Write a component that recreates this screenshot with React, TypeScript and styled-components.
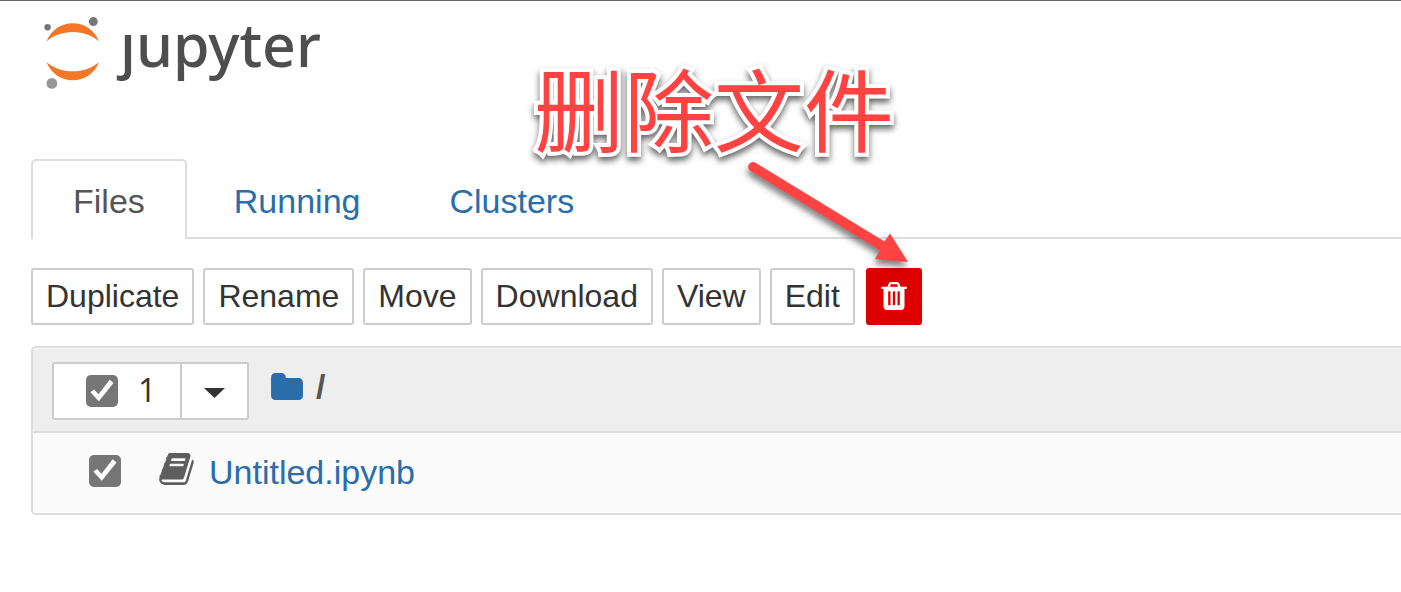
import React from "react";
import styled, { createGlobalStyle, css } from "styled-components";

const GlobalStyle = createGlobalStyle`
  *, *::before, *::after { box-sizing: border-box; }
  body {
    margin: 0;
    background: #fff;
    color: #333;
    font-family: "Liberation Sans", Arial, sans-serif;
    font-size: 32px;
    overflow-x: hidden;
  }
`;

const Page = styled.div`
  position: relative;
  border-top: 1px solid #666;
  padding-left: 31px;
`;

const Header = styled.header`
  height: 158px;
  padding: 14px 0 0 11px;
`;

const Logo = styled.a`
  display: inline-flex;
  align-items: flex-start;
  gap: 18px;
  color: #4e4e4e;
  text-decoration: none;
  font-family: "Noto Sans", "Open Sans", sans-serif;
  font-size: 59px;
  font-weight: 500;
  line-height: 58px;
`;

const TabBar = styled.nav`
  display: flex;
  gap: 5px;
  border-bottom: 2px solid #ddd;
`;

const Tab = styled.a<{ $active?: boolean }>`
  margin-bottom: -2px;
  padding: 16px 40px 14px;
  border: 2px solid transparent;
  border-bottom: 0;
  border-radius: 5px 5px 0 0;
  color: #296eaa;
  font-size: 34px;
  line-height: 48px;
  text-decoration: none;
  ${(p) =>
    p.$active &&
    css`
      border-color: #ddd;
      background: #fff;
      color: #555;
    `}
`;

const Toolbar = styled.div`
  display: flex;
  gap: 9px;
  margin-top: 29px;
`;

const Button = styled.button<{ $danger?: boolean }>`
  display: flex;
  align-items: center;
  justify-content: center;
  height: 57px;
  padding: 0 13px;
  border: 2px solid ${(p) => (p.$danger ? "#d00" : "#ccc")};
  border-radius: 3px;
  background: ${(p) => (p.$danger ? "#d00" : "#fff")};
  color: ${(p) => (p.$danger ? "#fff" : "#333")};
  font: inherit;
  cursor: pointer;
  ${(p) =>
    p.$danger &&
    css`
      margin-left: 2px;
      padding-bottom: 2px;
    `}
`;

const Panel = styled.main`
  margin-top: 21px;
  border: 2px solid #ddd;
  border-right: 0;
  border-radius: 5px 0 0 5px;
  overflow: hidden;
`;

const PanelHeader = styled.div`
  display: flex;
  align-items: flex-start;
  height: 85px;
  padding: 13px 19px;
  border-top: 1px solid #fafafa;
  border-bottom: 2px solid #ddd;
  background: #eee;
`;

const SelectGroup = styled.div`
  display: flex;
  height: 58px;
  border: 2px solid #ccc;
  border-radius: 3px;
  background: #fff;
`;

const SelectAll = styled.label`
  display: flex;
  align-items: center;
  gap: 20px;
  width: 126px;
  padding-left: 32px;
  font-family: "Open Sans", "Noto Sans", sans-serif;

  span { padding-bottom: 4px; }
`;

const Checkbox = styled.input`
  appearance: none;
  display: grid;
  flex: none;
  width: 32px;
  height: 32px;
  margin: 0;
  border-radius: 5px;
  background: #767676;

  &::after {
    content: "";
    width: 32px;
    height: 32px;
    background: #fff;
    clip-path: polygon(14% 54%, 25% 45%, 39% 60%, 74% 15%, 86% 25%, 40% 82%);
  }
`;

const MenuToggle = styled.button`
  display: flex;
  align-items: center;
  justify-content: center;
  width: 67px;
  padding: 4px 0 0;
  border: 0;
  border-left: 2px solid #ccc;
  background: none;
  color: #333;
`;

const Breadcrumb = styled.nav`
  display: flex;
  align-items: center;
  gap: 13px;
  height: 49px;
  margin-left: 22px;
  color: #555;
  font-size: 34px;
  font-weight: 700;

  a { display: flex; color: #296eaa; }
`;

const FileRow = styled.div`
  display: flex;
  align-items: center;
  height: 80px;
  padding: 0 56px 4px;
  border-bottom: 1px solid #fff;
  background: #fafafa;
  color: #5e5e5e;

  svg { margin: 0 15px 4px 38px; }
`;

const FileLink = styled.a`
  padding-top: 4px;
  color: #296eaa;
  font-size: 34px;
  text-decoration: none;
`;

const Note = styled.div`
  position: absolute;
  top: 40px;
  left: 534px;
  color: #ff4242;
  font-family: "Noto Sans CJK SC", sans-serif;
  font-size: 90px;
  line-height: 130px;
  white-space: nowrap;
  pointer-events: none;
  -webkit-text-stroke: 8px #fff;
  paint-order: stroke fill;
  stroke-linejoin: round;
  filter: drop-shadow(0 4px 3px rgba(0, 0, 0, 0.6));
`;

const Arrow = styled.svg`
  position: absolute;
  top: 149px;
  left: 740px;
  pointer-events: none;
  filter: drop-shadow(-1px 5px 3px rgba(0, 0, 0, 0.5));
`;

const Planet = () => (
  <svg width="60" height="76" viewBox="42 15 60 76" aria-hidden="true">
    <path d="M46.5 41.5C51 30 61 23.3 72.8 23.3S94.5 30 99 41.5C92.5 35.5 83 32 72.8 32S53 35.5 46.5 41.5Z" fill="#f37726" />
    <path d="M46.5 62C51 73.5 61 80.2 72.8 80.2S94.5 73.5 99 62C92.5 68 83 71.3 72.8 71.3S53 68 46.5 62Z" fill="#f37726" />
    <circle cx="47.6" cy="27.3" r="3.2" fill="#767677" />
    <circle cx="93.3" cy="21.6" r="4.5" fill="#767677" />
    <circle cx="51.9" cy="83.4" r="5.4" fill="#989798" />
  </svg>
);

const TrashIcon = () => (
  <svg width="26" height="28" viewBox="0 0 1408 1536" fill="currentColor" aria-hidden="true">
    <path d="M512 1248V544q0-14-9-23t-23-9h-64q-14 0-23 9t-9 23v704q0 14 9 23t23 9h64q14 0 23-9t9-23zm256 0V544q0-14-9-23t-23-9h-64q-14 0-23 9t-9 23v704q0 14 9 23t23 9h64q14 0 23-9t9-23zm256 0V544q0-14-9-23t-23-9h-64q-14 0-23 9t-9 23v704q0 14 9 23t23 9h64q14 0 23-9t9-23zM480 256h448l-48-117q-7-9-17-11H546q-10 2-17 11zm928 32v64q0 14-9 23t-23 9h-96v948q0 83-47 143.500t-113 60.500H288q-66 0-113-58.500T128 1336V384H32q-14 0-23-9t-9-23v-64q0-14 9-23t23-9h309l70-167q15-37 54-63t79-26h320q40 0 79 26t54 63l70 167h309q14 0 23 9t9 23z" />
  </svg>
);

const FolderIcon = () => (
  <svg width="32" height="27" viewBox="0 0 1664 1408" fill="currentColor" aria-hidden="true">
    <path d="M1664 480v704q0 92-66 158t-158 66H224q-92 0-158-66T0 1184V224Q0 132 66 66T224 0h320q92 0 158 66t66 158v32h672q92 0 158 66t66 158z" />
  </svg>
);

const BookIcon = () => (
  <svg width="35" height="32" viewBox="0 -40 1664 1540" fill="currentColor" aria-hidden="true">
    <path d="M1639 312q40 57 18 129l-275 906q-19 64-76.500 107.500T1183 1498H260q-77 0-148.500-53.500T12 1313q-24-67-2-127 0-4 3-27t4-37q1-8-3-21.500t-3-19.500q2-11 8-21t16.500-23.500T52 1013q23-38 45-91.500t30-91.500q3-10 .5-30t-.5-28q3-11 17-28t17-23q21-36 42-92t25-90q1-9-2.500-32t.5-28q4-13 22-30.500t22-22.500q19-26 42.500-84.500T340 243q1-8-3-25.500t-2-26.500q2-8 9-18t18-23 17-21q8-12 16.500-30.500t15-35 16-36 19.500-32T469.500-28t36-11.500T553-34l-1 3q38-9 51-9h761q74 0 114 56t18 130l-274 906q-36 119-71.500 153.500T1022 1240H153q-27 0-38 15-11 16-1 43 24 70 144 70h923q29 0 56-15.500t35-41.500l300-987q7-22 5-57 38 15 59 43zm-1064 2q-4 13 2 22.500t20 9.500h608q13 0 25.500-9.500t16.500-22.500l21-64q4-13-2-22.500t-20-9.500h-608q-13 0-25.500 9.500T596 250zm-83 256q-4 13 2 22.500t20 9.500h608q13 0 25.500-9.500t16.500-22.500l21-64q4-13-2-22.500t-20-9.500H555q-13 0-25.500 9.500T513 506z" />
  </svg>
);

const actions = ["Duplicate", "Rename", "Move", "Download", "View", "Edit"];

export default function App() {
  return (
    <>
      <GlobalStyle />
      <Page>
        <Header>
          <Logo href="#" aria-label="jupyter">
            <Planet />
            <span>ȷupyter</span>
          </Logo>
        </Header>
        <TabBar>
          <Tab href="#files" $active aria-current="page">Files</Tab>
          <Tab href="#running">Running</Tab>
          <Tab href="#clusters">Clusters</Tab>
        </TabBar>
        <Toolbar>
          {actions.map((name) => (
            <Button key={name} type="button">{name}</Button>
          ))}
          <Button type="button" $danger aria-label="Delete">
            <TrashIcon />
          </Button>
        </Toolbar>
        <Panel>
          <PanelHeader>
            <SelectGroup>
              <SelectAll>
                <Checkbox type="checkbox" defaultChecked />
                <span>1</span>
              </SelectAll>
              <MenuToggle type="button" aria-label="Select by type">
                <svg width="21" height="10" viewBox="0 0 21 10" aria-hidden="true">
                  <path d="M0 0H21L10.500 10Z" fill="currentColor" />
                </svg>
              </MenuToggle>
            </SelectGroup>
            <Breadcrumb>
              <a href="#root-folder" aria-label="Root folder"><FolderIcon /></a>
              <span>/</span>
            </Breadcrumb>
          </PanelHeader>
          <FileRow>
            <Checkbox type="checkbox" defaultChecked aria-label="Select Untitled.ipynb" />
            <BookIcon />
            <FileLink href="#untitled">Untitled.ipynb</FileLink>
          </FileRow>
        </Panel>
        <Note>删除文件</Note>
        <Arrow width="180" height="130" viewBox="740 150 180 130" aria-hidden="true">
          <path d="M755.5 162.8L884.5 241.5L890 233.5L908 262L875 259L880 250.5L750.5 171A4.8 4.8 0 0 1 755.5 162.8Z" fill="#ff4242" />
        </Arrow>
      </Page>
    </>
  );
}
